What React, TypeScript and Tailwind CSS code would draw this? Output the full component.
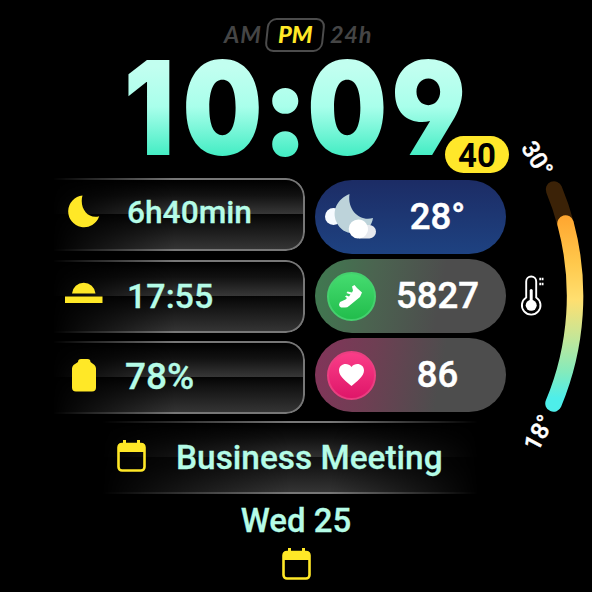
import type { ReactNode } from "react";

const ROBOTO = "font-['Roboto','Liberation_Sans',sans-serif]";

function PeriodSwitch() {
  return (
    <div className="flex h-[34px] items-center font-['Lato',sans-serif] text-[23.5px] font-bold italic leading-none text-[#454545]">
      <span className="w-[42px] whitespace-nowrap tracking-[1px]">AM</span>
      <span className="flex h-[34px] w-[58px] -skew-x-6 items-center justify-center rounded-[9px] border-2 border-[#4c4c4c] font-black text-[#ffe827]">
        <span className="skew-x-6">PM</span>
      </span>
      <span className="ml-[6px] whitespace-nowrap tracking-[0.7px]">24h</span>
    </div>
  );
}

function Digit({ children, className }: { children: ReactNode; className: string }) {
  return (
    <span
      className={`block bg-[linear-gradient(180deg,#c2fff0_18%,#a9ffeb_49%,#45edc4_86%)] bg-clip-text text-center text-transparent ${className}`}
    >
      {children}
    </span>
  );
}

function Clock() {
  return (
    <div className="flex h-[130px] font-['Inter',sans-serif] text-[130px] font-black leading-[130px] [font-feature-settings:'cv04']">
      <Digit className="w-[60px] scale-x-[0.87]">1</Digit>
      <Digit className="-ml-[3px] w-[93px] scale-x-[0.87]">0</Digit>
      <Digit className="-ml-[8px] w-[44px]">:</Digit>
      <Digit className="-ml-[4px] w-[92px] scale-x-[0.87]">0</Digit>
      <Digit className="-ml-[11px] w-[93px] scale-x-[0.9]">9</Digit>
    </div>
  );
}

function MoonIcon() {
  return (
    <svg width="32" height="33" viewBox="0 0 32 33" fill="#ffe827" className="-mt-[6px]">
      <path d="M14.5 0.5A15.9 15.9 0 1 0 31.2 21.3C20 24.5 11 13 14.5 0.5Z" />
    </svg>
  );
}

function SunsetIcon() {
  return (
    <svg width="38" height="23" viewBox="0 0 38 23" fill="#ffe827" className="-mt-[7px]">
      <path d="M7 12.5A11.8 11.8 0 0 1 30.5 12.5ZM0 15.5H37.5V22H0Z" />
    </svg>
  );
}

function BatteryIcon() {
  return (
    <svg width="24" height="33" viewBox="0 0 24 33" fill="#ffe827" className="-mt-[4px]">
      <path d="M6 3C6 1 7 0 9 0H15.5C17.500 0 18.500 1 18.500 3L22.500 6Q24 7.500 24 9.500V28.500Q24 32.500 20 32.500H4Q0 32.500 0 28.500V9.500Q0 7.500 1.500 6Z" />
    </svg>
  );
}

function CalendarIcon() {
  return (
    <svg width="29" height="32" viewBox="0 0 29 32">
      <path d="M7.500 0V4M21.500 0V4" stroke="#ffe827" strokeWidth="3" />
      <rect x="1.500" y="4" width="26" height="26.500" rx="3.500" fill="none" stroke="#ffe827" strokeWidth="2.600" />
      <path d="M1 12V7Q1 3 5 3H24Q28 3 28 7V12Z" fill="#ffe827" />
    </svg>
  );
}

function GlassCard({ icon, children, className }: { icon: ReactNode; children: ReactNode; className: string }) {
  return (
    <div className="grid h-[73px] w-[260px] [&>*]:[grid-area:1/1]">
      <div className="rounded-r-[19px] border-2 border-l-0 border-[#777] bg-[linear-gradient(180deg,#000_0%,#111_22%,#373737_49%,#050505_50%,#111_62%,#343434_100%)] [mask-image:linear-gradient(90deg,transparent_3%,#000_50%)]" />
      <div className="z-10 flex items-center">
        <div className="flex w-[78px] justify-center">{icon}</div>
        <span
          className={`whitespace-nowrap font-medium leading-none text-[#b5fce7] [-webkit-text-stroke:0.3px_#b5fce7] ${className}`}
        >
          {children}
        </span>
      </div>
    </div>
  );
}

function NightCloudIcon() {
  return (
    <svg width="52" height="46" viewBox="0 0 52 46">
      <circle cx="8.500" cy="22.500" r="8.500" fill="#f7fbff" />
      <path d="M24.500 0C12 5 6.500 17 11.500 28C16 38 25 41 35 38C43 36 47 31 48 24C36 28 22 17 24.500 0Z" fill="#bdd3da" />
      <path d="M34 31H44A6.500 6.500 0 0 1 44.500 44.500H34Z" fill="#e6e9ee" />
      <path d="M33.500 25.500A9.500 9.500 0 0 1 42.500 38Q40 44.500 33 44.500A9.500 9.500 0 0 1 33.500 25.500Z" fill="#fff" />
    </svg>
  );
}

function ShoeIcon() {
  return (
    <svg width="24" height="23" viewBox="0 0 24 23" fill="#fff">
      <path d="M13 1.500L15.500 0L18 3L23 7.500L21 12L10 21Q8.500 22.500 6 22.500H2Q0 21.500 0 19.500L1 17L6.500 14.500L8 13L6 11.500L7.500 10.500L10 11.500L11.500 9.500L7.500 8L8.500 6.500L13 7.500L14 5.500Z" />
    </svg>
  );
}

function HeartIcon() {
  return (
    <svg width="25" height="22" viewBox="0 0 25 22" fill="#fff">
      <path d="M12.500 22C8 18 0 12.500 0 6.500C0 0 8.500 -2.200 12.500 3C16.500 -2.200 25 0 25 6.500C25 12.500 17 18 12.500 22Z" />
    </svg>
  );
}

function Pill({ icon, children, className }: { icon: ReactNode; children: ReactNode; className: string }) {
  return (
    <div className={`flex h-[74px] w-[191.5px] items-center rounded-full ${className}`}>
      <div className="flex w-[73px] shrink-0 justify-center">{icon}</div>
      <span className="w-[100px] whitespace-nowrap text-center text-[36.5px] font-medium leading-none text-white [-webkit-text-stroke:0.5px_white]">
        {children}
      </span>
    </div>
  );
}

function TemperatureGauge() {
  return (
    <div className={`absolute inset-0 text-[24px] font-medium text-white ${ROBOTO}`}>
      <svg className="absolute inset-0" width="592" height="592" viewBox="0 0 592 592" fill="none" strokeLinecap="round">
        <defs>
          <linearGradient id="warmth" x1="0" y1="215" x2="0" y2="412" gradientUnits="userSpaceOnUse">
            <stop offset="0" stopColor="#ffa52f" />
            <stop offset="0.25" stopColor="#ffc94d" />
            <stop offset="0.43" stopColor="#ffdf70" />
            <stop offset="0.62" stopColor="#c5e697" />
            <stop offset="0.8" stopColor="#82ebbd" />
            <stop offset="0.93" stopColor="#4eeeea" />
          </linearGradient>
        </defs>
        <path d="M554 189.500A279 279 0 0 1 565.500 223.500" stroke="#3b2207" strokeWidth="16.500" />
        <path d="M565.500 223.500A279 279 0 0 1 553.500 403.500" stroke="url(#warmth)" strokeWidth="16.500" />
        <g stroke="#fff" strokeWidth="1.900">
          <path d="M526.200 297.500V281.500A5 5 0 0 1 536.200 281.500V297.500A9.300 9.300 0 1 1 526.200 297.500Z" />
          <path d="M531.200 290.500V304" strokeWidth="3" />
          <path d="M539.300 279H543.500M539.300 284H543.500" strokeWidth="2.500" strokeDasharray="1.800 0.600" strokeLinecap="butt" />
        </g>
        <circle cx="531.200" cy="305.300" r="5.500" fill="#fff" />
      </svg>
      <span className="absolute left-[517px] top-[146px] w-[40px] rotate-[58deg] text-center leading-[26px] [-webkit-text-stroke:0.4px_white]">
        30°
      </span>
      <span className="absolute left-[519px] top-[420px] w-[40px] -rotate-[62deg] text-center leading-[26px] [-webkit-text-stroke:0.4px_white]">
        18°
      </span>
    </div>
  );
}

export default function App() {
  return (
    <main className={`relative flex h-[592px] w-[592px] flex-col overflow-hidden bg-black ${ROBOTO}`}>
      <header className="flex flex-col pl-[224px] pt-[18px]">
        <PeriodSwitch />
      </header>
      <div className="-mt-[9px] h-[135px] pl-[119px]">
        <Clock />
      </div>

      <section className="flex gap-[9.5px] pl-[45px]">
        <div className="flex flex-col gap-[8.5px]">
          <GlassCard icon={<MoonIcon />} className="-mt-[3px] pl-[4px] text-[31.7px]">6h40min</GlassCard>
          <GlassCard icon={<SunsetIcon />} className="pl-[4px] text-[34px]">17:55</GlassCard>
          <GlassCard icon={<BatteryIcon />} className="-mt-[3px] pl-[2px] text-[37px]">78%</GlassCard>
        </div>
        <div className="flex flex-col gap-[5px] pt-[2px]">
          <Pill icon={<NightCloudIcon />} className="bg-[linear-gradient(180deg,#1c2c65,#1e4281)]">28°</Pill>
          <Pill
            icon={
              <span className="flex size-[49px] items-center justify-center rounded-full border-2 border-[#45d06e] bg-[linear-gradient(180deg,#45dc70,#22bd4c)]">
                <ShoeIcon />
              </span>
            }
            className="bg-[linear-gradient(100deg,#3f7a50_0%,#4b6450_30%,#4d4d4d_65%)]"
          >
            5827
          </Pill>
          <Pill
            icon={
              <span className="flex size-[49px] items-center justify-center rounded-full border-2 border-[#ea3f81] bg-[linear-gradient(180deg,#fa3d88,#df1669)]">
                <HeartIcon />
              </span>
            }
            className="bg-[linear-gradient(100deg,#83345a_0%,#6e3f53_30%,#4d4d4d_65%)]"
          >
            86
          </Pill>
        </div>
      </section>

      <section className="mt-[7px] grid h-[73px] pl-[90px] [&>*]:[grid-area:1/1]">
        <div className="w-[400px] border-y-2 border-[#777] bg-[linear-gradient(180deg,#000_0%,#111_22%,#303030_49%,#101010_50%,#151515_62%,#343434_100%)] [mask-image:linear-gradient(90deg,transparent_3%,#000_50%,#000_60%,transparent_97%)]" />
        <div className="z-10 flex items-center pb-[3px] pl-[27px]">
          <CalendarIcon />
          <span className="whitespace-nowrap pl-[30px] pt-[3px] text-[33.4px] font-medium leading-none text-[#b5fce7] [-webkit-text-stroke:0.3px_#b5fce7]">
            Business Meeting
          </span>
        </div>
      </section>

      <footer className="flex flex-col items-center pt-[8px]">
        <span className="h-[46px] whitespace-nowrap text-[33px] font-medium leading-[37px] text-[#b5fce7] [-webkit-text-stroke:0.3px_#b5fce7]">
          Wed 25
        </span>
        <CalendarIcon />
      </footer>

      <span className="absolute left-[445px] top-[136px] flex h-[37px] w-[64px] items-center justify-center rounded-full bg-[#ffe72a] pt-[1px] text-[33px] font-bold leading-none text-black">
        40
      </span>
      <TemperatureGauge />
    </main>
  );
}
